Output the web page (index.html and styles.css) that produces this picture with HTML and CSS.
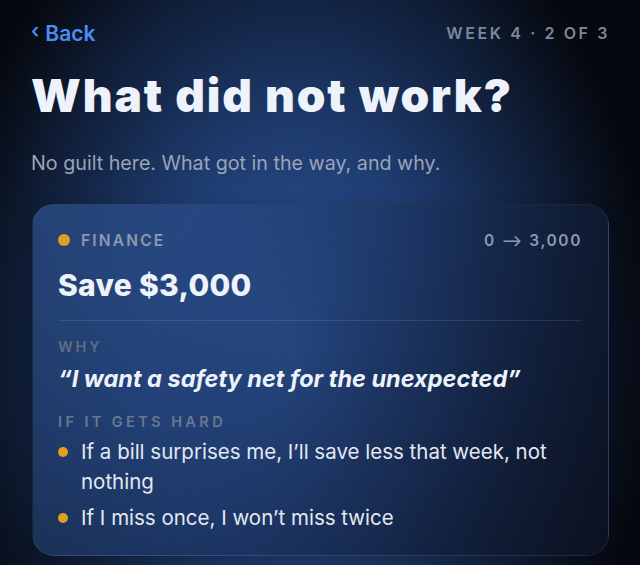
FILE: index.html
```html
<!DOCTYPE html>
<html>
<head>
<meta charset="utf-8">
<link rel="stylesheet" href="styles.css">
</head>
<body>
<div class="page">
  <div class="topbar">
    <a class="back"><span class="chev">‹</span>Back</a>
    <span class="step">WEEK 4 · 2 OF 3</span>
  </div>
  <h1 class="title">What did not work?</h1>
  <p class="subtitle">No guilt here. What got in the way, and why.</p>
  <div class="card">
    <div class="card-head">
      <span class="cat"><span class="dot"></span>FINANCE</span>
      <span class="range">0 ⟶ 3,000</span>
    </div>
    <div class="goal">Save $3,000</div>
    <div class="divider"></div>
    <div class="label">WHY</div>
    <div class="quote">“I want a safety net for the unexpected”</div>
    <div class="label label-hard">IF IT GETS HARD</div>
    <ul class="plans">
      <li><span class="bullet"></span><span>If a bill surprises me, I’ll save less that week, not nothing</span></li>
      <li><span class="bullet"></span><span>If I miss once, I won’t miss twice</span></li>
    </ul>
  </div>
</div>
</body>
</html>
```
FILE: styles.css
```css
html, body {
  margin: 0;
  padding: 0;
  height: 100%;
}
body {
  width: 640px;
  height: 565px;
  overflow: hidden;
  font-family: Inter, "Liberation Sans", sans-serif;
  color: #eef2f8;
  background:
    radial-gradient(ellipse 56% 90% at 46% 62%, #2e5599 0%, #1f3c70 42%, #0f1c34 78%, #05080e 100%);
}
.page {
  padding: 20px 31px 0 31px;
}
.topbar {
  display: flex;
  justify-content: space-between;
  align-items: center;
  height: 26px;
}
.back {
  color: #4b8cf0;
  font-size: 21px;
  font-weight: 600;
  display: flex;
  align-items: center;
}
.chev {
  font-size: 20px;
  margin-right: 6px;
  position: relative;
  top: -2px;
}
.step {
  color: #7b879c;
  font-size: 16px;
  font-weight: 600;
  letter-spacing: 2.6px;
  margin-right: -1px;
}
.title {
  margin: 22px 0 0 0;
  font-size: 46px;
  font-weight: 900;
  line-height: 54px;
  letter-spacing: 1.9px;
  color: #eef2fa;
}
.subtitle {
  margin: 28px 0 0 0;
  font-size: 19.7px;
  line-height: 26px;
  color: #9aa4b6;
  font-weight: 400;
}
.card {
  margin-top: 28px;
  margin-left: 1px;
  width: 577px;
  height: 352px;
  box-sizing: border-box;
  border-radius: 22px;
  border: 1px solid rgba(255,255,255,0.07);
  background: linear-gradient(120deg, rgba(58,104,180,0.5) 0%, rgba(28,52,96,0.5) 45%, rgba(12,18,34,0.85) 100%);
  box-shadow: 0 6px 18px rgba(0,0,0,0.25);
  padding: 24px 26px 0 25px;
}
.card-head {
  display: flex;
  justify-content: space-between;
  align-items: center;
  height: 22px;
}
.cat {
  display: flex;
  align-items: center;
  color: #8d99ae;
  font-size: 15.5px;
  font-weight: 600;
  letter-spacing: 2.2px;
}
.dot {
  width: 12px;
  height: 12px;
  border-radius: 50%;
  background: #e3a020;
  margin-right: 11px;
}
.range {
  color: #8d99ae;
  font-size: 15.5px;
  font-weight: 600;
  letter-spacing: 1.6px;
}
.goal {
  margin-top: 16px;
  font-size: 30px;
  font-weight: 800;
  line-height: 36px;
  letter-spacing: 0.3px;
  color: #eef2fa;
}
.divider {
  margin-top: 17px;
  height: 1px;
  background: rgba(255,255,255,0.1);
}
.label {
  margin-top: 17px;
  color: #5f6c83;
  font-size: 14.5px;
  font-weight: 600;
  letter-spacing: 2.8px;
  line-height: 18px;
}
.quote {
  margin-top: 8px;
  font-size: 23.5px;
  font-weight: 700;
  font-style: italic;
  line-height: 30px;
  color: #eef2fa;
}
.label-hard {
  margin-top: 19px;
  letter-spacing: 3.4px;
  color: #6a7890;
}
.plans {
  list-style: none;
  margin: 6px 0 0 0;
  padding: 0;
  display: flex;
  flex-direction: column;
  gap: 6px;
}
.plans li {
  display: flex;
  align-items: flex-start;
  font-size: 20.5px;
  line-height: 30px;
  color: #e2e8f2;
}
.bullet {
  flex: none;
  width: 10px;
  height: 10px;
  border-radius: 50%;
  background: #e3a020;
  margin: 10px 13px 0 0;
}
```
